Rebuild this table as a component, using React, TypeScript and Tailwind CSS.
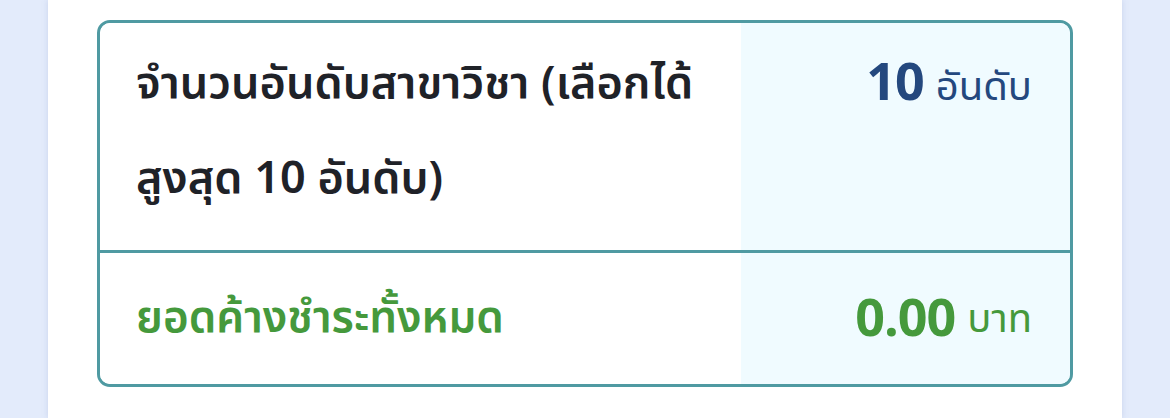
import React from 'react';

const thai = { fontFamily: '"Noto Sans Thai", "Noto Sans Thai UI", "Noto Sans", sans-serif' };

interface SummaryRowProps {
  label: React.ReactNode;
  value: string;
  unit: string;
  labelClass: string;
  valueClass: string;
  rowClass: string;
  last?: boolean;
}

const SummaryRow: React.FC<SummaryRowProps> = ({ label, value, unit, labelClass, valueClass, rowClass, last }) => (
  <div className={`flex ${last ? '' : 'border-b-[3px] border-[#4f9aa2]'}`}>
    <div className={`w-[641px] shrink-0 bg-white pl-[36px] pr-[26px] ${rowClass} ${labelClass}`}>{label}</div>
    <div className={`flex flex-1 justify-end gap-[12px] bg-[#f0fbff] pr-[38px] ${rowClass} ${valueClass}`}>
      <span className="font-bold text-[52px] tracking-[-1px]">{value}</span>
      <span className="font-normal text-[40px]">{unit}</span>
    </div>
  </div>
);

export default function App() {
  return (
    <div className="h-[418px] w-[1170px] bg-[#e3ebfb] px-[48px] overflow-hidden" style={thai}>
      <div className="h-full bg-white px-[49px] pt-[20px] shadow-[0_0_6px_rgba(120,140,190,0.25)]">
        <div className="overflow-hidden rounded-[13px] border-[3px] border-[#4f9aa2]">
          <SummaryRow
            label="จำนวนอันดับสาขาวิชา (เลือกได้สูงสุด 10 อันดับ)"
            value="10"
            unit="อันดับ"
            rowClass="pt-[14px] pb-[23px] leading-[95px]"
            labelClass="text-[45px] font-semibold text-[#1f2228]"
            valueClass="items-baseline self-stretch text-[#24487e]"
          />
          <SummaryRow
            label="ยอดค้างชำระทั้งหมด"
            value="0.00"
            unit="บาท"
            rowClass="h-[131px] flex items-center"
            labelClass="text-[44px] font-semibold text-[#45993c]"
            valueClass="items-baseline text-[#45993c] pt-[2px]"
            last
          />
        </div>
      </div>
    </div>
  );
}
